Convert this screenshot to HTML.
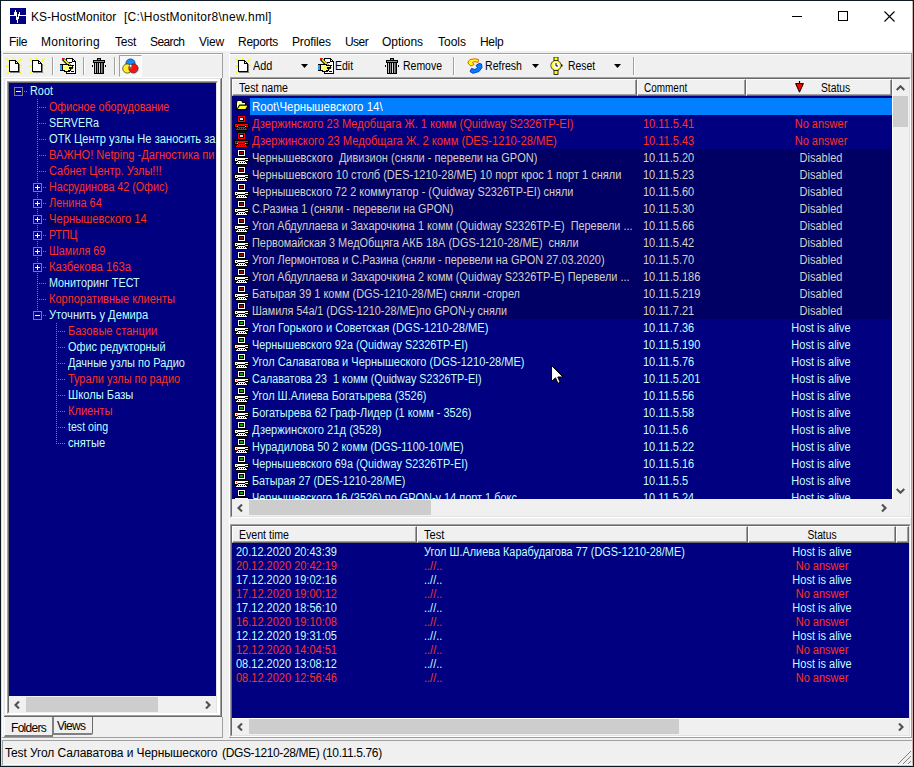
<!DOCTYPE html>
<html><head><meta charset="utf-8"><title>KS-HostMonitor</title>
<style>
html,body{margin:0;padding:0}
body{width:914px;height:767px;background:#F0F0F0;position:relative;overflow:hidden;font-family:"Liberation Sans",sans-serif;font-size:11px;color:#000}
div,span,svg{position:absolute;box-sizing:border-box}
.t{white-space:pre;font-size:12px;line-height:14px;height:14px;transform:scaleX(.917);transform-origin:0 50%}
.c{transform-origin:50% 50%}
.hdl{border-right:none}.hdl:after{border-right:none}
.ui{font-size:12px;line-height:15px;height:15px;white-space:pre}
.r{left:0;width:660px;height:17px}
.hd{background:#F0F0F0;border-left:1px solid #fff;border-top:1px solid #fff;border-right:1px solid #696969;border-bottom:1px solid #696969}
.hd:after{content:"";position:absolute;right:0;bottom:0;top:0;left:0;border-right:1px solid #A0A0A0;border-bottom:1px solid #A0A0A0}
</style></head><body>
<svg width="0" height="0" style="display:none">
<defs>
<symbol id="pc" viewBox="0 0 16 17">
<rect x="4" y="0" width="9" height="9" fill="#000"/>
<rect x="5" y="1" width="7" height="6" fill="currentColor"/>
<rect x="6" y="2" width="5" height="4" fill="#000"/>
<rect x="1" y="8" width="15" height="5" fill="#000"/>
<rect x="2" y="9" width="13" height="3" fill="currentColor"/>
<rect x="5" y="11" width="7" height="1" fill="#000"/>
<rect x="12" y="10" width="3" height="1" fill="#000"/>
<rect x="4" y="11" width="1" height="1" fill="#C0C0C0"/><rect x="12" y="11" width="1" height="1" fill="#C0C0C0"/>
<rect x="4" y="12" width="9" height="1" fill="#000"/><rect x="3" y="13" width="11" height="1" fill="#000"/><rect x="2" y="14" width="13" height="2" fill="#000"/>
<rect x="5" y="12" width="7" height="1" fill="currentColor"/>
<rect x="4" y="13" width="9" height="1" fill="currentColor"/>
<rect x="3" y="14" width="11" height="1" fill="currentColor"/>
<rect x="5" y="13" width="1" height="1" fill="#000"/><rect x="7" y="13" width="1" height="1" fill="#000"/><rect x="9" y="13" width="1" height="1" fill="#000"/><rect x="11" y="13" width="1" height="1" fill="#000"/>
</symbol>
</defs></svg>

<div style="left:0;top:0;width:914px;height:767px;border:1px solid #0c1820;border-top-color:#101c28"></div>
<div style="left:1px;top:1px;width:912px;height:50px;background:#fff"></div>
<svg style="left:10px;top:8px" width="16" height="16" viewBox="0 0 16 16" shape-rendering="crispEdges"><rect width="16" height="16" fill="#000080"/>
<path d="M0 7.5H4.5V4.5H5.5V1.5M5.5 1.5V7.5M6.5 4V12M7.5 9V14.5M8.5 6V11M9.5 3.5V7.5M9.5 7.5H16" stroke="#fff" stroke-width="1" fill="none"/></svg>
<span class="ui" style="left:31px;top:10px;letter-spacing:.04px">KS-HostMonitor</span>
<span class="ui" style="left:124px;top:10px;letter-spacing:.28px">[C:\HostMonitor8\new.hml]</span>
<div style="left:792px;top:16px;width:10px;height:1px;background:#000"></div>
<div style="left:838px;top:11px;width:10px;height:10px;border:1px solid #000"></div>
<svg style="left:884px;top:11px" width="11" height="11" viewBox="0 0 11 11"><path d="M0.5 0.5L10.5 10.5M10.5 0.5L0.5 10.5" stroke="#000" stroke-width="1.1"/></svg>
<span class="ui" style="left:9px;top:35px;letter-spacing:-0.3px">File</span>
<span class="ui" style="left:41px;top:35px;letter-spacing:0.3px">Monitoring</span>
<span class="ui" style="left:115px;top:35px;letter-spacing:-0.25px">Test</span>
<span class="ui" style="left:150px;top:35px;letter-spacing:-0.6px">Search</span>
<span class="ui" style="left:199px;top:35px;letter-spacing:-0.2px">View</span>
<span class="ui" style="left:238px;top:35px;letter-spacing:-0.28px">Reports</span>
<span class="ui" style="left:292px;top:35px;letter-spacing:-0.15px">Profiles</span>
<span class="ui" style="left:345px;top:35px;letter-spacing:-0.55px">User</span>
<span class="ui" style="left:382px;top:35px;letter-spacing:-0.05px">Options</span>
<span class="ui" style="left:438px;top:35px;letter-spacing:0px">Tools</span>
<span class="ui" style="left:480px;top:35px;letter-spacing:-0.3px">Help</span>
<div style="left:2px;top:53px;width:221px;height:1px;background:#A0A0A0"></div>
<div style="left:2px;top:54px;width:220px;height:1px;background:#fff"></div>
<div style="left:222px;top:53px;width:1px;height:25px;background:#A0A0A0"></div>
<div style="left:230px;top:53px;width:682px;height:1px;background:#A0A0A0"></div>
<div style="left:230px;top:54px;width:682px;height:1px;background:#fff"></div>
<div style="left:229px;top:53px;width:1px;height:685px;background:#fff"></div>
<div style="left:2px;top:52px;width:1px;height:689px;background:#fff"></div>
<div style="left:1px;top:51px;width:1px;height:715px;background:#EADCD6"></div>
<div style="left:912px;top:1px;width:1px;height:765px;background:#CDB9B1"></div>
<div style="left:1px;top:765px;width:912px;height:1px;background:#D9C9C2"></div>
<div style="left:3px;top:77px;width:219px;height:1px;background:#fff"></div>
<svg style="left:6px;top:58px" width="17" height="17" viewBox="0 0 17 17" shape-rendering="crispEdges">
<path d="M0.5 0.5L3.5 3.5M7.5 0V2.5M15.5 0.5L11.5 4.5M0 8.5L3 7.5M13 7.5H16M1 15.8L3.5 13M8 14V16M12.5 13L15.5 16" stroke="#FFFF00" stroke-width="1.5" shape-rendering="auto"/>
<path d="M3.5 2.5H9.5L12.5 5.5V13.5H3.5Z" fill="#fff" stroke="#000" stroke-width="1"/>
<path d="M9.5 2.5V5.5H12.5" fill="none" stroke="#000" stroke-width="1"/>
<path d="M4 14.5H13.5V6" fill="none" stroke="#808080" stroke-width="1"/></svg>
<svg style="left:29px;top:58px" width="17" height="17" viewBox="0 0 17 17" shape-rendering="crispEdges">
<path d="M0.5 0.5L3.5 3.5M7.5 0V2.5M15.5 0.5L11.5 4.5M0 8.5L3 7.5M13 7.5H16M1 15.8L3.5 13M8 14V16M12.5 13L15.5 16" stroke="#FFFF00" stroke-width="1.5" shape-rendering="auto"/>
<path d="M3.5 2.5H9.5L12.5 5.5V13.5H3.5Z" fill="#fff" stroke="#000" stroke-width="1"/>
<path d="M9.5 2.5V5.5H12.5" fill="none" stroke="#000" stroke-width="1"/>
<path d="M4 14.5H13.5V6" fill="none" stroke="#808080" stroke-width="1"/></svg>
<div style="left:52px;top:57px;width:1px;height:18px;background:#A0A0A0"></div><div style="left:53px;top:57px;width:1px;height:18px;background:#fff"></div>
<div style="left:83px;top:57px;width:1px;height:18px;background:#A0A0A0"></div><div style="left:84px;top:57px;width:1px;height:18px;background:#fff"></div>
<div style="left:114px;top:57px;width:1px;height:18px;background:#A0A0A0"></div><div style="left:115px;top:57px;width:1px;height:18px;background:#fff"></div>
<svg style="left:59px;top:57px" width="19" height="18" viewBox="0 0 19 18" shape-rendering="crispEdges">
<path d="M7.5 1.5H13.5L16.5 4.5V16.5H7.5Z" fill="#fff" stroke="#000"/>
<path d="M13.5 1.5V4.5H16.5" fill="none" stroke="#000"/>
<path d="M10 5H13M12 8H15M11 11H14M9 14H11M12 14H15M10 12H11" stroke="#000" stroke-width="1"/>
<path d="M4 2L13.5 11.5" stroke="#000" stroke-width="3" shape-rendering="auto"/>
<path d="M5 2.5L13.5 11" stroke="#FFFF00" stroke-width="1.5" shape-rendering="auto"/>
<rect x="3" y="1" width="2" height="2" fill="#FF0000"/>
<path d="M3.5 7.5H8.5L10.5 8.5H13.5V10.5H10.5V11.5H11.5V13.5H9.5V14.5H5.5V13.5H3.5Z" fill="#FFFF70" stroke="#000" stroke-width="1"/>
<rect x="1" y="7" width="2" height="7" fill="#20A0FF"/><path d="M0.5 7.5H3.5M0.5 13.5H3.5" stroke="#000"/>
</svg>
<svg style="left:92px;top:58px" width="14" height="16" viewBox="0 0 14 16" shape-rendering="crispEdges">
<rect x="5" y="0" width="4" height="2" fill="#000"/><rect x="6" y="1" width="2" height="1" fill="#808080"/>
<rect x="1" y="2" width="12" height="3" fill="#000"/><rect x="2" y="3" width="10" height="1" fill="#909090"/>
<rect x="2" y="5" width="10" height="11" fill="#000"/>
<rect x="3" y="5" width="1" height="10" fill="#C0C0C0"/><rect x="5" y="5" width="1" height="10" fill="#909090"/><rect x="7" y="5" width="1" height="10" fill="#E0E0E0"/><rect x="9" y="5" width="1" height="10" fill="#909090"/><rect x="10" y="5" width="1" height="10" fill="#505050"/>
<rect x="0" y="7" width="1" height="2" fill="#000"/><rect x="13" y="7" width="1" height="2" fill="#000"/>
</svg>
<div style="left:119px;top:55px;width:23px;height:22px;background:#F8F8F8;border:1px solid #A0A0A0;border-right-color:#fff;border-bottom-color:#fff"></div>
<svg style="left:122px;top:58px" width="17" height="17" viewBox="0 0 17 17">
<circle cx="8.5" cy="5.5" r="4.6" fill="#1090FF" stroke="#203060" stroke-width=".8"/>
<circle cx="5.3" cy="10.5" r="4.6" fill="#FFF020" stroke="#404020" stroke-width=".8"/>
<circle cx="11.5" cy="10.5" r="4.6" fill="#FF1010" stroke="#502020" stroke-width=".8"/>
<circle cx="8.3" cy="9" r="2" fill="#A06040"/><circle cx="8.6" cy="7.8" r="1" fill="#fff"/>
<path d="M13 14.5L15.5 12" stroke="#606060" stroke-width="1.5"/>
</svg>
<svg style="left:235px;top:58px" width="17" height="17" viewBox="0 0 17 17" shape-rendering="crispEdges">
<path d="M0.5 0.5L3.5 3.5M7.5 0V2.5M15.5 0.5L11.5 4.5M0 8.5L3 7.5M13 7.5H16M1 15.8L3.5 13M8 14V16M12.5 13L15.5 16" stroke="#FFFF00" stroke-width="1.5" shape-rendering="auto"/>
<path d="M3.5 2.5H9.5L12.5 5.5V13.5H3.5Z" fill="#fff" stroke="#000" stroke-width="1"/>
<path d="M9.5 2.5V5.5H12.5" fill="none" stroke="#000" stroke-width="1"/>
<path d="M4 14.5H13.5V6" fill="none" stroke="#808080" stroke-width="1"/></svg>
<span class="t" style="left:253px;top:59px;transform:scaleX(0.9036)">Add</span>
<svg style="left:301px;top:64px" width="7" height="4" viewBox="0 0 7 4" shape-rendering="crispEdges"><path d="M0 0H7L3.5 4Z" fill="#000" shape-rendering="auto"/></svg>
<svg style="left:317px;top:57px" width="19" height="18" viewBox="0 0 19 18" shape-rendering="crispEdges">
<path d="M7.5 1.5H13.5L16.5 4.5V16.5H7.5Z" fill="#fff" stroke="#000"/>
<path d="M13.5 1.5V4.5H16.5" fill="none" stroke="#000"/>
<path d="M10 5H13M12 8H15M11 11H14M9 14H11M12 14H15M10 12H11" stroke="#000" stroke-width="1"/>
<path d="M4 2L13.5 11.5" stroke="#000" stroke-width="3" shape-rendering="auto"/>
<path d="M5 2.5L13.5 11" stroke="#FFFF00" stroke-width="1.5" shape-rendering="auto"/>
<rect x="3" y="1" width="2" height="2" fill="#FF0000"/>
<path d="M3.5 7.5H8.5L10.5 8.5H13.5V10.5H10.5V11.5H11.5V13.5H9.5V14.5H5.5V13.5H3.5Z" fill="#FFFF70" stroke="#000" stroke-width="1"/>
<rect x="1" y="7" width="2" height="7" fill="#20A0FF"/><path d="M0.5 7.5H3.5M0.5 13.5H3.5" stroke="#000"/>
</svg>
<span class="t" style="left:335px;top:59px;transform:scaleX(0.8749)">Edit</span>
<svg style="left:385px;top:58px" width="14" height="16" viewBox="0 0 14 16" shape-rendering="crispEdges">
<rect x="5" y="0" width="4" height="2" fill="#000"/><rect x="6" y="1" width="2" height="1" fill="#808080"/>
<rect x="1" y="2" width="12" height="3" fill="#000"/><rect x="2" y="3" width="10" height="1" fill="#909090"/>
<rect x="2" y="5" width="10" height="11" fill="#000"/>
<rect x="3" y="5" width="1" height="10" fill="#C0C0C0"/><rect x="5" y="5" width="1" height="10" fill="#909090"/><rect x="7" y="5" width="1" height="10" fill="#E0E0E0"/><rect x="9" y="5" width="1" height="10" fill="#909090"/><rect x="10" y="5" width="1" height="10" fill="#505050"/>
<rect x="0" y="7" width="1" height="2" fill="#000"/><rect x="13" y="7" width="1" height="2" fill="#000"/>
</svg>
<span class="t" style="left:403px;top:59px;transform:scaleX(0.8727)">Remove</span>
<div style="left:453px;top:57px;width:1px;height:18px;background:#A0A0A0"></div><div style="left:454px;top:57px;width:1px;height:18px;background:#fff"></div>
<svg style="left:467px;top:58px" width="16" height="16" viewBox="0 0 16 16">
<path d="M1 4L3 1.5L8 0.8L11.5 1.5L11 4.5L8 3.5L5.5 4.5L7 6.5L4 8L1.5 6Z" fill="#FFFF00" stroke="#E06000" stroke-width="1"/>
<path d="M14.5 6L15 9.5L12 13.5L6 15.3L3 13.5L4.5 10.5L8 11.5L10.5 9.5L9 7.5L12 5.5Z" fill="#0080FF" stroke="#0040C0" stroke-width="1"/>
</svg>
<span class="t" style="left:485px;top:59px;transform:scaleX(0.8803)">Refresh</span>
<svg style="left:532px;top:64px" width="7" height="4" viewBox="0 0 7 4" shape-rendering="crispEdges"><path d="M0 0H7L3.5 4Z" fill="#000" shape-rendering="auto"/></svg>
<svg style="left:549px;top:57px" width="14" height="18" viewBox="0 0 14 18">
<rect x="5" y="0" width="4" height="4" fill="#FFFF00" stroke="#000" stroke-width=".8"/>
<rect x="5" y="13" width="4" height="4.5" fill="#FFFF00" stroke="#000" stroke-width=".8"/>
<circle cx="7" cy="8.5" r="5" fill="#fff" stroke="#000" stroke-width="1"/>
<circle cx="7" cy="8.5" r="4" fill="none" stroke="#FFFF00" stroke-width="1.4"/>
<path d="M7 6V9H9" stroke="#000" stroke-width="1" fill="none"/>
<rect x="12" y="7.5" width="1.5" height="2" fill="#000"/>
</svg>
<span class="t" style="left:568px;top:59px;transform:scaleX(0.8674)">Reset</span>
<svg style="left:614px;top:64px" width="7" height="4" viewBox="0 0 7 4" shape-rendering="crispEdges"><path d="M0 0H7L3.5 4Z" fill="#000" shape-rendering="auto"/></svg>
<div style="left:633px;top:57px;width:1px;height:18px;background:#A0A0A0"></div><div style="left:634px;top:57px;width:1px;height:18px;background:#fff"></div>
<div style="left:4px;top:78px;width:218px;height:639px;border:1px solid #E3E3E3;border-right:2px solid #A0A0A0;border-bottom:2px solid #A0A0A0"></div>
<div style="left:5px;top:79px;width:215px;height:636px;background:#fff"></div>
<div style="left:7px;top:81px;width:211px;height:633px;background:#F0F0F0;border-left:1px solid #A0A0A0;border-top:1px solid #A0A0A0;border-right:1px solid #fff;border-bottom:1px solid #fff"></div>
<div style="left:8px;top:82px;width:209px;height:631px;border-left:1px solid #696969;border-top:1px solid #696969;border-right:1px solid #E3E3E3;border-bottom:1px solid #E3E3E3"></div>
<div style="left:221px;top:78px;width:1px;height:639px;background:#696969"></div>
<div style="left:4px;top:716px;width:218px;height:1px;background:#696969"></div>
<div id="tree" style="left:9px;top:83px;width:207px;height:613px;background:#000080;overflow:hidden">
<div style="left:28px;top:16px;width:1px;height:217px;background:repeating-linear-gradient(to bottom,#808080 0 1px,transparent 1px 2px)"></div>
<div style="left:47px;top:240px;width:1px;height:121px;background:repeating-linear-gradient(to bottom,#808080 0 1px,transparent 1px 2px)"></div>
<div style="left:15px;top:8px;width:3px;height:1px;background:repeating-linear-gradient(to right,#808080 0 1px,transparent 1px 2px)"></div>
<div style="left:5px;top:4px;width:9px;height:9px;border:1px solid #808078;background:#000080"></div>
<div style="left:7px;top:8px;width:5px;height:1px;background:#fff"></div>
<span class="t" style="left:21px;top:1px;color:#C0FFFF;transform:scaleX(0.9070)">Root</span>
<div style="left:30px;top:24px;width:7px;height:1px;background:repeating-linear-gradient(to right,#808080 0 1px,transparent 1px 2px)"></div>
<span class="t" style="left:40px;top:17px;color:#FF3020;transform:scaleX(0.8958)">Офисное оборудование</span>
<div style="left:30px;top:40px;width:7px;height:1px;background:repeating-linear-gradient(to right,#808080 0 1px,transparent 1px 2px)"></div>
<span class="t" style="left:40px;top:33px;color:#C0FFFF;transform:scaleX(0.8941)">SERVERа</span>
<div style="left:30px;top:56px;width:7px;height:1px;background:repeating-linear-gradient(to right,#808080 0 1px,transparent 1px 2px)"></div>
<span class="t" style="left:40px;top:49px;color:#C0FFFF;transform:scaleX(0.9296)">ОТК Центр узлы Не заносить за</span>
<div style="left:30px;top:72px;width:7px;height:1px;background:repeating-linear-gradient(to right,#808080 0 1px,transparent 1px 2px)"></div>
<span class="t" style="left:40px;top:65px;color:#FF3020;transform:scaleX(0.9222)">ВАЖНО! Netping -Дагностика пи</span>
<div style="left:30px;top:88px;width:7px;height:1px;background:repeating-linear-gradient(to right,#808080 0 1px,transparent 1px 2px)"></div>
<span class="t" style="left:40px;top:81px;color:#FF3020;transform:scaleX(0.9143)">Сабнет Центр. Узлы!!!</span>
<div style="left:34px;top:104px;width:3px;height:1px;background:repeating-linear-gradient(to right,#808080 0 1px,transparent 1px 2px)"></div>
<div style="left:24px;top:100px;width:9px;height:9px;border:1px solid #808078;background:#000080"></div>
<div style="left:26px;top:104px;width:5px;height:1px;background:#fff"></div>
<div style="left:28px;top:102px;width:1px;height:5px;background:#fff"></div>
<span class="t" style="left:40px;top:97px;color:#FF3020;transform:scaleX(0.8910)">Насрудинова 42 (Офис)</span>
<div style="left:34px;top:120px;width:3px;height:1px;background:repeating-linear-gradient(to right,#808080 0 1px,transparent 1px 2px)"></div>
<div style="left:24px;top:116px;width:9px;height:9px;border:1px solid #808078;background:#000080"></div>
<div style="left:26px;top:120px;width:5px;height:1px;background:#fff"></div>
<div style="left:28px;top:118px;width:1px;height:5px;background:#fff"></div>
<span class="t" style="left:40px;top:113px;color:#FF3020;transform:scaleX(0.9123)">Ленина 64</span>
<div style="left:34px;top:136px;width:3px;height:1px;background:repeating-linear-gradient(to right,#808080 0 1px,transparent 1px 2px)"></div>
<div style="left:24px;top:132px;width:9px;height:9px;border:1px solid #808078;background:#000080"></div>
<div style="left:26px;top:136px;width:5px;height:1px;background:#fff"></div>
<div style="left:28px;top:134px;width:1px;height:5px;background:#fff"></div>
<div style="left:38px;top:128px;width:101px;height:16px;background:#000064"></div>
<span class="t" style="left:40px;top:129px;color:#FF3020;transform:scaleX(0.9343)">Чернышевского 14</span>
<div style="left:34px;top:152px;width:3px;height:1px;background:repeating-linear-gradient(to right,#808080 0 1px,transparent 1px 2px)"></div>
<div style="left:24px;top:148px;width:9px;height:9px;border:1px solid #808078;background:#000080"></div>
<div style="left:26px;top:152px;width:5px;height:1px;background:#fff"></div>
<div style="left:28px;top:150px;width:1px;height:5px;background:#fff"></div>
<span class="t" style="left:40px;top:145px;color:#FF3020;transform:scaleX(0.8793)">РТПЦ</span>
<div style="left:34px;top:168px;width:3px;height:1px;background:repeating-linear-gradient(to right,#808080 0 1px,transparent 1px 2px)"></div>
<div style="left:24px;top:164px;width:9px;height:9px;border:1px solid #808078;background:#000080"></div>
<div style="left:26px;top:168px;width:5px;height:1px;background:#fff"></div>
<div style="left:28px;top:166px;width:1px;height:5px;background:#fff"></div>
<span class="t" style="left:40px;top:161px;color:#FF3020;transform:scaleX(0.8947)">Шамиля 69</span>
<div style="left:34px;top:184px;width:3px;height:1px;background:repeating-linear-gradient(to right,#808080 0 1px,transparent 1px 2px)"></div>
<div style="left:24px;top:180px;width:9px;height:9px;border:1px solid #808078;background:#000080"></div>
<div style="left:26px;top:184px;width:5px;height:1px;background:#fff"></div>
<div style="left:28px;top:182px;width:1px;height:5px;background:#fff"></div>
<span class="t" style="left:40px;top:177px;color:#FF3020;transform:scaleX(0.9392)">Казбекова 163а</span>
<div style="left:30px;top:200px;width:7px;height:1px;background:repeating-linear-gradient(to right,#808080 0 1px,transparent 1px 2px)"></div>
<span class="t" style="left:40px;top:193px;color:#C0FFFF;transform:scaleX(0.8996)">Мониторинг ТЕСТ</span>
<div style="left:30px;top:216px;width:7px;height:1px;background:repeating-linear-gradient(to right,#808080 0 1px,transparent 1px 2px)"></div>
<span class="t" style="left:40px;top:209px;color:#FF3020;transform:scaleX(0.9193)">Корпоративные клиенты</span>
<div style="left:34px;top:232px;width:3px;height:1px;background:repeating-linear-gradient(to right,#808080 0 1px,transparent 1px 2px)"></div>
<div style="left:24px;top:228px;width:9px;height:9px;border:1px solid #808078;background:#000080"></div>
<div style="left:26px;top:232px;width:5px;height:1px;background:#fff"></div>
<span class="t" style="left:40px;top:225px;color:#C0FFFF;transform:scaleX(0.9324)">Уточнить у Демира</span>
<div style="left:49px;top:248px;width:7px;height:1px;background:repeating-linear-gradient(to right,#808080 0 1px,transparent 1px 2px)"></div>
<span class="t" style="left:59px;top:241px;color:#FF3020;transform:scaleX(0.9253)">Базовые станции</span>
<div style="left:49px;top:264px;width:7px;height:1px;background:repeating-linear-gradient(to right,#808080 0 1px,transparent 1px 2px)"></div>
<span class="t" style="left:59px;top:257px;color:#C0FFFF;transform:scaleX(0.9079)">Офис редукторный</span>
<div style="left:49px;top:280px;width:7px;height:1px;background:repeating-linear-gradient(to right,#808080 0 1px,transparent 1px 2px)"></div>
<span class="t" style="left:59px;top:273px;color:#C0FFFF;transform:scaleX(0.9173)">Дачные узлы по Радио</span>
<div style="left:49px;top:296px;width:7px;height:1px;background:repeating-linear-gradient(to right,#808080 0 1px,transparent 1px 2px)"></div>
<span class="t" style="left:59px;top:289px;color:#FF3020;transform:scaleX(0.9079)">Турали узлы по радио</span>
<div style="left:49px;top:312px;width:7px;height:1px;background:repeating-linear-gradient(to right,#808080 0 1px,transparent 1px 2px)"></div>
<span class="t" style="left:59px;top:305px;color:#C0FFFF;transform:scaleX(0.9303)">Школы Базы</span>
<div style="left:49px;top:328px;width:7px;height:1px;background:repeating-linear-gradient(to right,#808080 0 1px,transparent 1px 2px)"></div>
<span class="t" style="left:59px;top:321px;color:#FF3020;transform:scaleX(0.9226)">Клиенты</span>
<div style="left:49px;top:344px;width:7px;height:1px;background:repeating-linear-gradient(to right,#808080 0 1px,transparent 1px 2px)"></div>
<span class="t" style="left:59px;top:337px;color:#C0FFFF;transform:scaleX(0.8837)">test oing</span>
<div style="left:49px;top:360px;width:7px;height:1px;background:repeating-linear-gradient(to right,#808080 0 1px,transparent 1px 2px)"></div>
<span class="t" style="left:59px;top:353px;color:#C0FFFF;transform:scaleX(0.9318)">снятые</span>
</div>
<div style="left:9px;top:696px;width:207px;height:17px;background:#F0F0F0"></div><div style="left:26px;top:697px;width:132px;height:15px;background:#CDCDCD"></div><svg style="left:14px;top:701px" width="6" height="8" viewBox="0 0 6 8"><path d="M5 0.5L1.5 4L5 7.5" stroke="#505050" stroke-width="2.1" fill="none"/></svg><svg style="left:205px;top:701px" width="6" height="8" viewBox="0 0 6 8"><path d="M1 0.5L4.5 4L1 7.5" stroke="#505050" stroke-width="2.1" fill="none"/></svg>
<div style="left:222px;top:717px;width:1px;height:21px;background:#A0A0A0"></div>
<div style="left:2px;top:737px;width:221px;height:1px;background:#A0A0A0"></div>
<div style="left:4px;top:717px;width:49px;height:20px;background:#F0F0F0;border-left:1px solid #fff;border-right:1px solid #696969;border-bottom:2px solid #808080"></div>
<div style="left:52px;top:717px;width:41px;height:18px;border:1px solid #696969;border-top:none;border-left:2px solid #808080;border-bottom:2px solid #808080;border-radius:0 0 2px 2px"></div>
<span class="ui" style="left:11px;top:721px;letter-spacing:-.7px">Folders</span>
<span class="ui" style="left:57px;top:719px;letter-spacing:-.7px">Views</span>
<div style="left:230px;top:77px;width:681px;height:441px;border-left:1px solid #A0A0A0;border-top:1px solid #A0A0A0;border-right:1px solid #fff;border-bottom:1px solid #fff"></div>
<div style="left:231px;top:78px;width:679px;height:439px;border-left:1px solid #696969;border-top:1px solid #696969;border-right:1px solid #E3E3E3;border-bottom:1px solid #E3E3E3"></div>
<div style="left:911px;top:53px;width:1px;height:685px;background:#A0A0A0"></div>
<div style="left:232px;top:96px;width:660px;height:403px;background:#000080;overflow:hidden">
<div class="r" style="top:2px">
<div style="left:18px;top:0;width:642px;height:17px;background:#0080FF"></div>
<svg style="left:4px;top:2px" width="13" height="10" viewBox="0 0 13 10">
<path d="M0 2L1 0H6L7 2H10V4.6H13L10 10H0Z" fill="#000"/>
<path d="M1 2.4L1.7 1H5.4L6.3 3H9V4.6H3.4L1 8.6Z" fill="#FFFFB0"/>
<path d="M3.9 5.7H11.3L9.4 9H1.7Z" fill="#FFFF30"/></svg>
<span class="t" style="left:20px;top:2px;color:#fff;transform:scaleX(0.9555)">Root\Чернышевского 14\</span>
</div>
<div class="r" style="top:19px">
<svg style="left:1px;top:0;color:#FF0000" width="16" height="17" shape-rendering="crispEdges"><use href="#pc"/><rect x="7" y="3" width="3" height="2" fill="#E0E0E0"/><rect x="3" y="10" width="1" height="1" fill="#000"/></svg>
<span class="t" style="left:20px;top:2px;color:#FF3020;transform:scaleX(0.9229)">Дзержинского 23 Медобщага Ж. 1 комм (Quidway S2326TP-EI)</span>
<span class="t" style="left:411px;top:2px;color:#FF3020">10.11.5.41</span>
<span class="t c" style="left:516px;top:2px;width:146px;text-align:center;color:#FF3020">No answer</span>
</div>
<div class="r" style="top:36px">
<svg style="left:1px;top:0;color:#FF0000" width="16" height="17" shape-rendering="crispEdges"><use href="#pc"/><rect x="7" y="3" width="3" height="2" fill="#E0E0E0"/><rect x="3" y="10" width="1" height="1" fill="#000"/></svg>
<span class="t" style="left:20px;top:2px;color:#FF3020;transform:scaleX(0.9318)">Дзержинского 23 Медобщага Ж. 2 комм (DES-1210-28/ME)</span>
<span class="t" style="left:411px;top:2px;color:#FF3020">10.11.5.43</span>
<span class="t c" style="left:516px;top:2px;width:146px;text-align:center;color:#FF3020">No answer</span>
</div>
<div class="r" style="top:53px">
<div style="left:18px;top:0;width:642px;height:17px;background:#000064"></div>
<svg style="left:1px;top:0;color:#fff" width="16" height="17" shape-rendering="crispEdges"><use href="#pc"/><rect x="7" y="3" width="3" height="2" fill="#A00000"/><rect x="3" y="10" width="1" height="1" fill="#000"/></svg>
<span class="t" style="left:20px;top:2px;color:#D4D0C8;transform:scaleX(0.9179)">Чернышевского  Дивизион (сняли - перевели на GPON)</span>
<span class="t" style="left:411px;top:2px;color:#D4D0C8">10.11.5.20</span>
<span class="t c" style="left:516px;top:2px;width:146px;text-align:center;color:#D4D0C8">Disabled</span>
</div>
<div class="r" style="top:70px">
<div style="left:18px;top:0;width:642px;height:17px;background:#000064"></div>
<svg style="left:1px;top:0;color:#fff" width="16" height="17" shape-rendering="crispEdges"><use href="#pc"/><rect x="7" y="3" width="3" height="2" fill="#A00000"/><rect x="3" y="10" width="1" height="1" fill="#000"/></svg>
<span class="t" style="left:20px;top:2px;color:#D4D0C8;transform:scaleX(0.9174)">Чернышевского 10 столб (DES-1210-28/ME) 10 порт крос 1 порт 1 сняли</span>
<span class="t" style="left:411px;top:2px;color:#D4D0C8">10.11.5.23</span>
<span class="t c" style="left:516px;top:2px;width:146px;text-align:center;color:#D4D0C8">Disabled</span>
</div>
<div class="r" style="top:87px">
<div style="left:18px;top:0;width:642px;height:17px;background:#000064"></div>
<svg style="left:1px;top:0;color:#fff" width="16" height="17" shape-rendering="crispEdges"><use href="#pc"/><rect x="7" y="3" width="3" height="2" fill="#A00000"/><rect x="3" y="10" width="1" height="1" fill="#000"/></svg>
<span class="t" style="left:20px;top:2px;color:#D4D0C8;transform:scaleX(0.9095)">Чернышевского 72 2 коммутатор - (Quidway S2326TP-EI) сняли</span>
<span class="t" style="left:411px;top:2px;color:#D4D0C8">10.11.5.60</span>
<span class="t c" style="left:516px;top:2px;width:146px;text-align:center;color:#D4D0C8">Disabled</span>
</div>
<div class="r" style="top:104px">
<div style="left:18px;top:0;width:642px;height:17px;background:#000064"></div>
<svg style="left:1px;top:0;color:#fff" width="16" height="17" shape-rendering="crispEdges"><use href="#pc"/><rect x="7" y="3" width="3" height="2" fill="#A00000"/><rect x="3" y="10" width="1" height="1" fill="#000"/></svg>
<span class="t" style="left:20px;top:2px;color:#D4D0C8;transform:scaleX(0.8970)">С.Разина 1 (сняли - перевели на GPON)</span>
<span class="t" style="left:411px;top:2px;color:#D4D0C8">10.11.5.30</span>
<span class="t c" style="left:516px;top:2px;width:146px;text-align:center;color:#D4D0C8">Disabled</span>
</div>
<div class="r" style="top:121px">
<div style="left:18px;top:0;width:642px;height:17px;background:#000064"></div>
<svg style="left:1px;top:0;color:#fff" width="16" height="17" shape-rendering="crispEdges"><use href="#pc"/><rect x="7" y="3" width="3" height="2" fill="#A00000"/><rect x="3" y="10" width="1" height="1" fill="#000"/></svg>
<span class="t" style="left:20px;top:2px;color:#D4D0C8;transform:scaleX(0.9063)">Угол Абдуллаева и Захарочкина 1 комм (Quidway S2326TP-E)  Перевели ...</span>
<span class="t" style="left:411px;top:2px;color:#D4D0C8">10.11.5.66</span>
<span class="t c" style="left:516px;top:2px;width:146px;text-align:center;color:#D4D0C8">Disabled</span>
</div>
<div class="r" style="top:138px">
<div style="left:18px;top:0;width:642px;height:17px;background:#000064"></div>
<svg style="left:1px;top:0;color:#fff" width="16" height="17" shape-rendering="crispEdges"><use href="#pc"/><rect x="7" y="3" width="3" height="2" fill="#A00000"/><rect x="3" y="10" width="1" height="1" fill="#000"/></svg>
<span class="t" style="left:20px;top:2px;color:#D4D0C8;transform:scaleX(0.9106)">Первомайская 3 МедОбщяга АКБ 18А (DGS-1210-28/ME)  сняли</span>
<span class="t" style="left:411px;top:2px;color:#D4D0C8">10.11.5.42</span>
<span class="t c" style="left:516px;top:2px;width:146px;text-align:center;color:#D4D0C8">Disabled</span>
</div>
<div class="r" style="top:155px">
<div style="left:18px;top:0;width:642px;height:17px;background:#000064"></div>
<svg style="left:1px;top:0;color:#fff" width="16" height="17" shape-rendering="crispEdges"><use href="#pc"/><rect x="7" y="3" width="3" height="2" fill="#A00000"/><rect x="3" y="10" width="1" height="1" fill="#000"/></svg>
<span class="t" style="left:20px;top:2px;color:#D4D0C8;transform:scaleX(0.9112)">Угол Лермонтова и С.Разина (сняли - перевели на GPON 27.03.2020)</span>
<span class="t" style="left:411px;top:2px;color:#D4D0C8">10.11.5.70</span>
<span class="t c" style="left:516px;top:2px;width:146px;text-align:center;color:#D4D0C8">Disabled</span>
</div>
<div class="r" style="top:172px">
<div style="left:18px;top:0;width:642px;height:17px;background:#000064"></div>
<svg style="left:1px;top:0;color:#fff" width="16" height="17" shape-rendering="crispEdges"><use href="#pc"/><rect x="7" y="3" width="3" height="2" fill="#A00000"/><rect x="3" y="10" width="1" height="1" fill="#000"/></svg>
<span class="t" style="left:20px;top:2px;color:#D4D0C8;transform:scaleX(0.9063)">Угол Абдуллаева и Захарочкина 2 комм (Quidway S2326TP-E) Перевели ...</span>
<span class="t" style="left:411px;top:2px;color:#D4D0C8">10.11.5.186</span>
<span class="t c" style="left:516px;top:2px;width:146px;text-align:center;color:#D4D0C8">Disabled</span>
</div>
<div class="r" style="top:189px">
<div style="left:18px;top:0;width:642px;height:17px;background:#000064"></div>
<svg style="left:1px;top:0;color:#fff" width="16" height="17" shape-rendering="crispEdges"><use href="#pc"/><rect x="7" y="3" width="3" height="2" fill="#A00000"/><rect x="3" y="10" width="1" height="1" fill="#000"/></svg>
<span class="t" style="left:20px;top:2px;color:#D4D0C8;transform:scaleX(0.9123)">Батырая 39 1 комм (DGS-1210-28/ME) сняли -сгорел</span>
<span class="t" style="left:411px;top:2px;color:#D4D0C8">10.11.5.219</span>
<span class="t c" style="left:516px;top:2px;width:146px;text-align:center;color:#D4D0C8">Disabled</span>
</div>
<div class="r" style="top:206px">
<div style="left:18px;top:0;width:642px;height:17px;background:#000064"></div>
<svg style="left:1px;top:0;color:#fff" width="16" height="17" shape-rendering="crispEdges"><use href="#pc"/><rect x="7" y="3" width="3" height="2" fill="#A00000"/><rect x="3" y="10" width="1" height="1" fill="#000"/></svg>
<span class="t" style="left:20px;top:2px;color:#D4D0C8;transform:scaleX(0.8976)">Шамиля 54а/1 (DGS-1210-28/ME)по GPON-у сняли</span>
<span class="t" style="left:411px;top:2px;color:#D4D0C8">10.11.7.21</span>
<span class="t c" style="left:516px;top:2px;width:146px;text-align:center;color:#D4D0C8">Disabled</span>
</div>
<div class="r" style="top:223px">
<svg style="left:1px;top:0;color:#fff" width="16" height="17" shape-rendering="crispEdges"><use href="#pc"/><rect x="7" y="3" width="3" height="2" fill="#00A800"/><rect x="3" y="10" width="1" height="1" fill="#FF0000"/></svg>
<span class="t" style="left:20px;top:2px;color:#C0FFFF;transform:scaleX(0.9309)">Угол Горького и Советская (DGS-1210-28/ME)</span>
<span class="t" style="left:411px;top:2px;color:#C0FFFF">10.11.7.36</span>
<span class="t c" style="left:516px;top:2px;width:146px;text-align:center;color:#C0FFFF">Host is alive</span>
</div>
<div class="r" style="top:240px">
<svg style="left:1px;top:0;color:#fff" width="16" height="17" shape-rendering="crispEdges"><use href="#pc"/><rect x="7" y="3" width="3" height="2" fill="#00A800"/><rect x="3" y="10" width="1" height="1" fill="#FF0000"/></svg>
<span class="t" style="left:20px;top:2px;color:#C0FFFF;transform:scaleX(0.9065)">Чернышевского 92а (Quidway S2326TP-EI)</span>
<span class="t" style="left:411px;top:2px;color:#C0FFFF">10.11.5.190</span>
<span class="t c" style="left:516px;top:2px;width:146px;text-align:center;color:#C0FFFF">Host is alive</span>
</div>
<div class="r" style="top:257px">
<svg style="left:1px;top:0;color:#fff" width="16" height="17" shape-rendering="crispEdges"><use href="#pc"/><rect x="7" y="3" width="3" height="2" fill="#00A800"/><rect x="3" y="10" width="1" height="1" fill="#FF0000"/></svg>
<span class="t" style="left:20px;top:2px;color:#C0FFFF;transform:scaleX(0.9190)">Угол Салаватова и Чернышеского (DGS-1210-28/ME)</span>
<span class="t" style="left:411px;top:2px;color:#C0FFFF">10.11.5.76</span>
<span class="t c" style="left:516px;top:2px;width:146px;text-align:center;color:#C0FFFF">Host is alive</span>
</div>
<div class="r" style="top:274px">
<svg style="left:1px;top:0;color:#fff" width="16" height="17" shape-rendering="crispEdges"><use href="#pc"/><rect x="7" y="3" width="3" height="2" fill="#00A800"/><rect x="3" y="10" width="1" height="1" fill="#FF0000"/></svg>
<span class="t" style="left:20px;top:2px;color:#C0FFFF;transform:scaleX(0.8994)">Салаватова 23  1 комм (Quidway S2326TP-EI)</span>
<span class="t" style="left:411px;top:2px;color:#C0FFFF">10.11.5.201</span>
<span class="t c" style="left:516px;top:2px;width:146px;text-align:center;color:#C0FFFF">Host is alive</span>
</div>
<div class="r" style="top:291px">
<svg style="left:1px;top:0;color:#fff" width="16" height="17" shape-rendering="crispEdges"><use href="#pc"/><rect x="7" y="3" width="3" height="2" fill="#00A800"/><rect x="3" y="10" width="1" height="1" fill="#FF0000"/></svg>
<span class="t" style="left:20px;top:2px;color:#C0FFFF;transform:scaleX(0.9165)">Угол Ш.Алиева Богатырева (3526)</span>
<span class="t" style="left:411px;top:2px;color:#C0FFFF">10.11.5.56</span>
<span class="t c" style="left:516px;top:2px;width:146px;text-align:center;color:#C0FFFF">Host is alive</span>
</div>
<div class="r" style="top:308px">
<svg style="left:1px;top:0;color:#fff" width="16" height="17" shape-rendering="crispEdges"><use href="#pc"/><rect x="7" y="3" width="3" height="2" fill="#00A800"/><rect x="3" y="10" width="1" height="1" fill="#FF0000"/></svg>
<span class="t" style="left:20px;top:2px;color:#C0FFFF;transform:scaleX(0.9115)">Богатырева 62 Граф-Лидер (1 комм - 3526)</span>
<span class="t" style="left:411px;top:2px;color:#C0FFFF">10.11.5.58</span>
<span class="t c" style="left:516px;top:2px;width:146px;text-align:center;color:#C0FFFF">Host is alive</span>
</div>
<div class="r" style="top:325px">
<svg style="left:1px;top:0;color:#fff" width="16" height="17" shape-rendering="crispEdges"><use href="#pc"/><rect x="7" y="3" width="3" height="2" fill="#00A800"/><rect x="3" y="10" width="1" height="1" fill="#FF0000"/></svg>
<span class="t" style="left:20px;top:2px;color:#C0FFFF;transform:scaleX(0.9299)">Дзержинского 21д (3528)</span>
<span class="t" style="left:411px;top:2px;color:#C0FFFF">10.11.5.6</span>
<span class="t c" style="left:516px;top:2px;width:146px;text-align:center;color:#C0FFFF">Host is alive</span>
</div>
<div class="r" style="top:342px">
<svg style="left:1px;top:0;color:#fff" width="16" height="17" shape-rendering="crispEdges"><use href="#pc"/><rect x="7" y="3" width="3" height="2" fill="#00A800"/><rect x="3" y="10" width="1" height="1" fill="#FF0000"/></svg>
<span class="t" style="left:20px;top:2px;color:#C0FFFF;transform:scaleX(0.9093)">Нурадилова 50 2 комм (DGS-1100-10/ME)</span>
<span class="t" style="left:411px;top:2px;color:#C0FFFF">10.11.5.22</span>
<span class="t c" style="left:516px;top:2px;width:146px;text-align:center;color:#C0FFFF">Host is alive</span>
</div>
<div class="r" style="top:359px">
<svg style="left:1px;top:0;color:#fff" width="16" height="17" shape-rendering="crispEdges"><use href="#pc"/><rect x="7" y="3" width="3" height="2" fill="#00A800"/><rect x="3" y="10" width="1" height="1" fill="#FF0000"/></svg>
<span class="t" style="left:20px;top:2px;color:#C0FFFF;transform:scaleX(0.9065)">Чернышевского 69а (Quidway S2326TP-EI)</span>
<span class="t" style="left:411px;top:2px;color:#C0FFFF">10.11.5.16</span>
<span class="t c" style="left:516px;top:2px;width:146px;text-align:center;color:#C0FFFF">Host is alive</span>
</div>
<div class="r" style="top:376px">
<svg style="left:1px;top:0;color:#fff" width="16" height="17" shape-rendering="crispEdges"><use href="#pc"/><rect x="7" y="3" width="3" height="2" fill="#00A800"/><rect x="3" y="10" width="1" height="1" fill="#FF0000"/></svg>
<span class="t" style="left:20px;top:2px;color:#C0FFFF;transform:scaleX(0.9001)">Батырая 27 (DES-1210-28/ME)</span>
<span class="t" style="left:411px;top:2px;color:#C0FFFF">10.11.5.5</span>
<span class="t c" style="left:516px;top:2px;width:146px;text-align:center;color:#C0FFFF">Host is alive</span>
</div>
<div class="r" style="top:393px">
<svg style="left:1px;top:0;color:#fff" width="16" height="17" shape-rendering="crispEdges"><use href="#pc"/><rect x="7" y="3" width="3" height="2" fill="#00A800"/><rect x="3" y="10" width="1" height="1" fill="#FF0000"/></svg>
<span class="t" style="left:20px;top:2px;color:#C0FFFF;transform:scaleX(0.9096)">Чернышевского 16 (3526) по GPON-у 14 порт 1 бокс</span>
<span class="t" style="left:411px;top:2px;color:#C0FFFF">10.11.5.24</span>
<span class="t c" style="left:516px;top:2px;width:146px;text-align:center;color:#C0FFFF">Host is alive</span>
</div>
</div>
<div class="hd" style="left:232px;top:79px;width:405px;height:17px"></div><span class="t" style="left:239px;top:81px;transform:scaleX(0.8851)">Test name</span><div class="hd" style="left:637px;top:79px;width:109px;height:17px"></div><span class="t" style="left:644px;top:81px;transform:scaleX(0.8305)">Comment</span><div class="hd hdl" style="left:746px;top:79px;width:146px;height:17px"></div>
<span class="t" style="left:821px;top:81px;transform:scaleX(0.8580)">Status</span>
<svg style="left:795px;top:81px" width="9" height="12" viewBox="0 0 9 12"><path d="M4.5 0V3" stroke="#000" stroke-width="1.2"/><path d="M0.6 2.6H8.4L4.5 11.2Z" fill="#FF0000" stroke="#000" stroke-width="1"/></svg>
<div style="left:892px;top:79px;width:17px;height:420px;background:#F0F0F0;border-left:1px solid #fff"></div>
<div style="left:893px;top:96px;width:15px;height:31px;background:#CDCDCD"></div>
<svg style="left:896px;top:85px" width="9" height="6" viewBox="0 0 9 6"><path d="M0.7 5L4.5 1.3L8.3 5" stroke="#505050" stroke-width="2.1" fill="none"/></svg>
<svg style="left:896px;top:488px" width="9" height="6" viewBox="0 0 9 6"><path d="M0.7 1L4.5 4.7L8.3 1" stroke="#505050" stroke-width="2.1" fill="none"/></svg>
<div style="left:232px;top:499px;width:660px;height:17px;background:#F0F0F0"></div><div style="left:249px;top:500px;width:182px;height:15px;background:#CDCDCD"></div><svg style="left:237px;top:504px" width="6" height="8" viewBox="0 0 6 8"><path d="M5 0.5L1.5 4L5 7.5" stroke="#505050" stroke-width="2.1" fill="none"/></svg><svg style="left:881px;top:504px" width="6" height="8" viewBox="0 0 6 8"><path d="M1 0.5L4.5 4L1 7.5" stroke="#505050" stroke-width="2.1" fill="none"/></svg>
<div style="left:892px;top:499px;width:17px;height:17px;background:#F0F0F0"></div>
<div style="left:230px;top:524px;width:681px;height:213px;border-left:1px solid #A0A0A0;border-top:1px solid #A0A0A0;border-right:1px solid #fff;border-bottom:1px solid #fff"></div>
<div style="left:231px;top:525px;width:679px;height:211px;border-left:1px solid #696969;border-top:1px solid #696969;border-right:1px solid #E3E3E3;border-bottom:1px solid #E3E3E3"></div>
<div style="left:911px;top:524px;width:1px;height:214px;background:#A0A0A0"></div>
<div style="left:229px;top:737px;width:683px;height:1px;background:#A0A0A0"></div>
<div style="left:232px;top:543px;width:677px;height:175px;background:#000080;overflow:hidden">
<span class="t" style="left:4px;top:2px;color:#C0FFFF">20.12.2020 20:43:39</span>
<span class="t" style="left:192px;top:2px;color:#C0FFFF;transform:scaleX(0.9091)">Угол Ш.Алиева Карабудагова 77 (DGS-1210-28/ME)</span>
<span class="t c" style="left:516px;top:2px;width:148px;text-align:center;color:#C0FFFF">Host is alive</span>
<span class="t" style="left:4px;top:16px;color:#FF3020">20.12.2020 20:42:19</span>
<span class="t" style="left:192px;top:16px;color:#FF3020">..//..</span>
<span class="t c" style="left:516px;top:16px;width:148px;text-align:center;color:#FF3020">No answer</span>
<span class="t" style="left:4px;top:30px;color:#C0FFFF">17.12.2020 19:02:16</span>
<span class="t" style="left:192px;top:30px;color:#C0FFFF">..//..</span>
<span class="t c" style="left:516px;top:30px;width:148px;text-align:center;color:#C0FFFF">Host is alive</span>
<span class="t" style="left:4px;top:44px;color:#FF3020">17.12.2020 19:00:12</span>
<span class="t" style="left:192px;top:44px;color:#FF3020">..//..</span>
<span class="t c" style="left:516px;top:44px;width:148px;text-align:center;color:#FF3020">No answer</span>
<span class="t" style="left:4px;top:58px;color:#C0FFFF">17.12.2020 18:56:10</span>
<span class="t" style="left:192px;top:58px;color:#C0FFFF">..//..</span>
<span class="t c" style="left:516px;top:58px;width:148px;text-align:center;color:#C0FFFF">Host is alive</span>
<span class="t" style="left:4px;top:72px;color:#FF3020">16.12.2020 19:10:08</span>
<span class="t" style="left:192px;top:72px;color:#FF3020">..//..</span>
<span class="t c" style="left:516px;top:72px;width:148px;text-align:center;color:#FF3020">No answer</span>
<span class="t" style="left:4px;top:86px;color:#C0FFFF">12.12.2020 19:31:05</span>
<span class="t" style="left:192px;top:86px;color:#C0FFFF">..//..</span>
<span class="t c" style="left:516px;top:86px;width:148px;text-align:center;color:#C0FFFF">Host is alive</span>
<span class="t" style="left:4px;top:100px;color:#FF3020">12.12.2020 14:04:51</span>
<span class="t" style="left:192px;top:100px;color:#FF3020">..//..</span>
<span class="t c" style="left:516px;top:100px;width:148px;text-align:center;color:#FF3020">No answer</span>
<span class="t" style="left:4px;top:114px;color:#C0FFFF">08.12.2020 13:08:12</span>
<span class="t" style="left:192px;top:114px;color:#C0FFFF">..//..</span>
<span class="t c" style="left:516px;top:114px;width:148px;text-align:center;color:#C0FFFF">Host is alive</span>
<span class="t" style="left:4px;top:128px;color:#FF3020">08.12.2020 12:56:46</span>
<span class="t" style="left:192px;top:128px;color:#FF3020">..//..</span>
<span class="t c" style="left:516px;top:128px;width:148px;text-align:center;color:#FF3020">No answer</span>
</div>
<div class="hd" style="left:232px;top:526px;width:185px;height:17px"></div><span class="t" style="left:239px;top:528px;transform:scaleX(0.8818)">Event time</span><div class="hd" style="left:417px;top:526px;width:331px;height:17px"></div><span class="t" style="left:424px;top:528px;transform:scaleX(0.9266)">Test</span><div class="hd" style="left:748px;top:526px;width:148px;height:17px"></div><span class="t c" style="left:748px;top:528px;width:148px;text-align:center;transform:scaleX(0.8580)">Status</span><div class="hd hdl" style="left:896px;top:526px;width:13px;height:17px"></div>
<div style="left:232px;top:718px;width:677px;height:17px;background:#F0F0F0"></div><div style="left:249px;top:719px;width:430px;height:15px;background:#CDCDCD"></div><svg style="left:237px;top:723px" width="6" height="8" viewBox="0 0 6 8"><path d="M5 0.5L1.5 4L5 7.5" stroke="#505050" stroke-width="2.1" fill="none"/></svg><svg style="left:898px;top:723px" width="6" height="8" viewBox="0 0 6 8"><path d="M1 0.5L4.5 4L1 7.5" stroke="#505050" stroke-width="2.1" fill="none"/></svg>
<div style="left:232px;top:718px;width:677px;height:1px;background:#fff"></div>
<div style="left:2px;top:740px;width:910px;height:1px;background:#A0A0A0"></div>
<div style="left:2px;top:741px;width:1px;height:24px;background:#A0A0A0"></div>
<div style="left:3px;top:764px;width:909px;height:1px;background:#fff"></div>
<span class="ui" style="left:5px;top:746px;letter-spacing:-.08px">Test Угол Салаватова и Чернышеского</span>
<span class="ui" style="left:222px;top:746px;letter-spacing:-.37px">(DGS-1210-28/ME) (10.11.5.76)</span>
<svg style="left:898px;top:751px" width="13" height="13" viewBox="0 0 13 13"><path d="M0 13L13 0M5 13L13 5M10 13L13 10" stroke="#808080" stroke-width="1"/></svg>
<svg style="left:551px;top:365px" width="13" height="20" viewBox="0 0 13 20"><path d="M0.5 0.5V16.5L4.5 12.8L6.9 18.3L9.1 17.3L6.8 12H12Z" fill="#fff" stroke="#000" stroke-width="1"/></svg>
</body></html>
